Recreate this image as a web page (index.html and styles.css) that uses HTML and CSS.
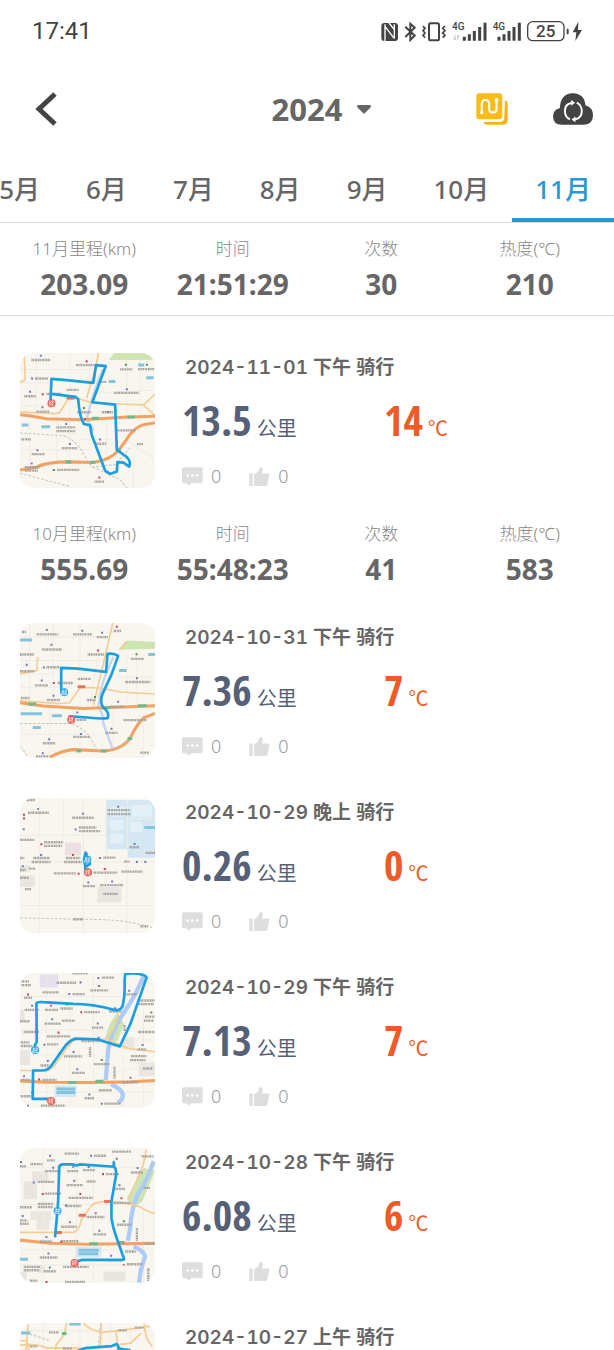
FILE: index.html
```html
<!DOCTYPE html>
<html lang="zh-CN">
<head>
  <meta charset="UTF-8" />
  <meta name="viewport" content="width=device-width, initial-scale=1.0" />
  <title>骑行记录</title>
  <link rel="stylesheet" href="styles.css">
</head>
<body>
  <svg class="defs" aria-hidden="true">
    <symbol id="icon-comment" viewBox="0 0 63 56">
      <path d="M5 0h52q5 0 5 5v38q0 5-5 5H28l-8 8-7-8H5q-5 0-5-5V5q0-5 5-5z" fill="#dedede"/>
      <circle cx="17" cy="25" r="4" fill="#fff"/><circle cx="31" cy="25" r="4" fill="#fff"/><circle cx="45" cy="25" r="4" fill="#fff"/>
    </symbol>
    <symbol id="icon-like" viewBox="0 0 60 56">
      <path d="M0 19h10v37H0zM14 21Q26 17 30 3q3-5 8-1 4 5-1 17h18q5 0 4 5l-6 28q-1 4-6 4H14z" fill="#dedede"/>
    </symbol>
    <symbol id="pin-start" viewBox="0 0 26 26">
      <circle cx="13" cy="13" r="12" fill="#2ba3e8"/>
      <path d="M6 9h7M9 5v13M9 14h4M6 14q0 5-2 6 8 0 17 0M14 7h6v5h-5v4h6" fill="none" stroke="#fff" stroke-width="2"/>
    </symbol>
    <symbol id="pin-end" viewBox="0 0 26 26">
      <circle cx="13" cy="13" r="12" fill="#ee5a52"/>
      <path d="M9 5l-3 5h4l-4 5h5M5 19l6-1M15 5l-3 5M14 7h5q-2 6-7 8M14 9l6 6M14 16l4 1M13 19l5 2" fill="none" stroke="#fff" stroke-width="2"/>
    </symbol>
  </svg>

  <div class="app">
    <div class="status-bar">
      <span class="clock">17:41</span>
      <div class="status-icons">
        <svg width="17" height="21" viewBox="218 60 51 63">
          <path d="M228 66h32q9 0 9 9v36q0 9-9 9h-32q-9 0-9-9V75q0-9 9-9z" fill="#444"/>
          <path d="M230 70v50M230 76l28 37M242 66l16 20v24M258 70v42M230 88v25" fill="none" stroke="#fff" stroke-width="4"/>
        </svg>
        <svg width="12" height="21" viewBox="289 60 36 63">
          <path d="M293 77l28 27-13 13V68l13 12-28 28" fill="none" stroke="#444" stroke-width="6"/>
        </svg>
        <svg width="24" height="21" viewBox="345 60 72 63">
          <rect x="366" y="67" width="30" height="51" rx="5" fill="none" stroke="#444" stroke-width="6"/>
          <path d="M348 75l6 7-6 7 6 7-6 7 6 7M414 75l-7 7 7 7-7 7 7 7-7 7" fill="none" stroke="#444" stroke-width="5"/>
        </svg>
        <svg width="35" height="21" viewBox="435 60 105 63">
          <text x="435" y="87" class="net">4G</text>
          <path d="M444 103v14l-5-5M452 117v-14l5 5" fill="none" stroke="#bbb" stroke-width="3"/>
          <path d="M472 107v12M487 100v19M502 90v29M518 78v41M534 65v54" stroke="#444" stroke-width="9"/>
        </svg>
        <svg width="28" height="21" viewBox="558 60 84 63">
          <text x="557" y="87" class="net">4G</text>
          <path d="M576 107v12M591 100v19M606 90v29M621 78v41M637 65v54" stroke="#444" stroke-width="9"/>
        </svg>
        <svg width="55" height="21" viewBox="662 60 165 63">
          <rect x="664" y="62" width="109" height="57" rx="15" fill="none" stroke="#444" stroke-width="4"/>
          <path d="M781 83h3q3 0 3 3v11q0 3-3 3h-3z" fill="#444"/>
          <text x="718" y="109" class="battery">25</text>
          <path d="M816 62l-17 32h11l-3 26 20-33h-12z" fill="#444"/>
        </svg>
      </div>
    </div>

    <header class="header">
      <button class="back" aria-label="返回">
        <svg width="22" height="34" viewBox="0 0 22 34"><path d="M20 2L4 17l16 15" fill="none" stroke="#444" stroke-width="5"/></svg>
      </button>
      <label class="year">
        <select aria-label="年份"><option>2024</option></select>
        <svg class="year-arrow" width="14" height="10" viewBox="0 0 14 10"><path d="M1 0h12q2 1 0 3L8 8q-1 1-2 0L1 3q-2-2 0-3z" fill="#666"/></svg>
      </label>
      <div class="actions">
        <button aria-label="轨迹">
          <svg width="32" height="32" viewBox="507 276 95 95">
            <path d="M593 298q8 0 8 9v49q0 14-14 14h-48q-8 0-10-8h49q13 0 13-13z" fill="#f9b21c"/>
            <rect x="508" y="277" width="77" height="77" rx="9" fill="#fbbc1a"/>
            <path d="M524 335v-25q0-13 11-13t11 13v12q0 12 11 12t11-12v-23" fill="none" stroke="#fff" stroke-width="6"/>
            <circle cx="524" cy="334" r="5" fill="#fff"/><circle cx="568" cy="297" r="6" fill="#fff"/>
          </svg>
        </button>
        <button aria-label="同步">
          <svg width="40" height="32" viewBox="738 276 121 96">
            <path d="M765 372q-27-1-27-26 0-19 21-25 1-44 39-45 36 1 38 37 23 6 23 31 0 27-27 28z" fill="#444"/>
            <path d="M794 306q-20 3-20 24 0 18 15 25M805 355q20-3 20-25 0-17-15-25" fill="none" stroke="#fff" stroke-width="6"/>
            <path d="M793 297l12 8-12 9zM806 347l-12 9 12 8z" fill="#fff"/>
          </svg>
        </button>
      </div>
    </header>

    <nav class="tabs">
      <a href="#m5">5月</a>
      <a href="#m6">6月</a>
      <a href="#m7">7月</a>
      <a href="#m8">8月</a>
      <a href="#m9">9月</a>
      <a href="#m10">10月</a>
      <a href="#m11" class="active">11月</a>
    </nav>

    <main class="records">
      <section>
        <dl class="stats stats-top">
          <div><dt>11月里程(km)</dt><dd>203.09</dd></div>
          <div><dt>时间</dt><dd>21:51:29</dd></div>
          <div><dt>次数</dt><dd>30</dd></div>
          <div><dt>热度(℃)</dt><dd>210</dd></div>
        </dl>
        <div class="rides rides-first">
          <article class="ride">
            <svg class="map" viewBox="31 41 403 403">
              <path class="park" d="M296 62l16-21h122v20l-54 1z"/>
              <path class="street" d="M31 130h90M31 200l100-6M80 41v180M180 41v330M245 41l-20 200M31 90h230M350 60v160M390 60v190M250 160l184-8M140 240v120M290 240v110M31 330h210M350 300l84 60M60 240v140M370 340v103M210 300h110"/>
              <path class="river" d="M278 90q-33 80-48 150 18 22 20 34"/>
              <path class="road" d="M265 41l-7 39-28 95M31 217l109 5 10-4 25-40 25-3 45 15 100 4 55 2 34-32M400 197l34 30M31 130l16-10-4-79"/>
              <path class="highway" d="M31 225l29 3 50 9 110 3 120-7 94-3M31 390l49-8q30-16 100-16l70 2q50-8 75-36l20-27q25-43 55-50l34-6"/>
              <path class="rail" d="M31 280l129 8q40 12 65 62l20 30q45 20 85 40l20 23M31 400l150 40M245 382l70-8 45-50"/>
              <path class="label" d="M65 62h56M198 77h56M76 117h38M44 170h35M110 163h44M170 151h36M330 90h36M383 89h50M312 160h74M140 263h56M140 274h56M156 325h46M255 312h34M318 272h58M35 299h30M66 343h38M46 382h44M46 392h40M142 390h66M254 425h28M80 216h38M270 127h18M202 218h42M275 218h33M380 313h20"/>
              <path class="sign" d="M95 261h26M296 126h20M384 77h18M36 256h20M408 115h22"/>
              <path class="sign-green" d="M245 236h22M352 232h22M168 366h16M240 367h16M318 330h14"/>
              <path class="sign-red" d="M170 175h24"/>
              <path class="poi" d="M93 46v6M67 114v6M61 154v6M98 200v6M169 250v6M180 310v6M270 296v6M83 328v6M66 368v6M350 146v6M293 214v6"/>
              <path class="poi-red" d="M230 63v6M99 161v6M225 235v6M268 410v6"/>
              <path class="poi-green" d="M347 73v6M410 73v6M222 202v6M132 387v6"/>
              <path class="route" d="M122 182l3-64 45 4 80 8 8-53 29 3-40 108 68 7 5 135 28 20q16 15 9 30l-17-12-18-1-2 28-20 7-15-10-40-107-5-28-18-4q-14-23-17-73l-8-8-72-9"/>
              <use href="#pin-end" x="112" y="178" width="26" height="26"/>
            </svg>
            <div class="info">
              <h3>2024-11-01 下午 骑行</h3>
              <div class="figures">
                <p class="distance"><b>13.5</b>公里</p>
                <p class="heat"><b>14</b>℃</p>
              </div>
              <div class="social">
                <button aria-label="评论"><svg class="social-icon"><use href="#icon-comment"/></svg>0</button>
                <button aria-label="点赞"><svg class="social-icon"><use href="#icon-like"/></svg>0</button>
              </div>
            </div>
          </article>
        </div>
      </section>

      <section>
        <dl class="stats">
          <div><dt>10月里程(km)</dt><dd>555.69</dd></div>
          <div><dt>时间</dt><dd>55:48:23</dd></div>
          <div><dt>次数</dt><dd>41</dd></div>
          <div><dt>热度(℃)</dt><dd>583</dd></div>
        </dl>
        <div class="rides">
          <article class="ride">
            <svg class="map" viewBox="31 38 403 403">
              <path class="park" d="M328 118l22-28 84 5v20z"/>
              <path class="street" d="M31 150h270M60 38v240M130 38v240M210 38v380M31 80h270M320 200h114M380 115v175M350 140v140M31 230h150M31 370h240M120 290v140M310 290v110M400 330v108M270 100l-30 180M31 190h100"/>
              <path class="river" d="M310 140q-38 70-45 145 16 30 14 50l28 78"/>
              <path class="road" d="M308 38l-16 70-42 175M31 270l110 8q20 1 38-2l32-46 60 2 60 12 103 6M31 190l50-10 3-40M328 118l20-25"/>
              <path class="highway" d="M31 276l70 10 120 7 213-8M120 438q40-20 70-22l90 4q60-5 82-42 18-40 40-58l32-12"/>
              <path class="rail" d="M31 338h150q50 15 70 60l10 20M300 415q40-10 60-40M31 408q14 12 22 30"/>
              <path class="label" d="M80 72h65M190 72h56M97 117h58M110 170h38M31 132h42M31 182h44M76 224h38M143 217h46M233 132h50M345 214h75M203 205h38M112 268h40M340 328h70M190 378h48M100 397h36M286 366h36M260 80h34M310 62h24M362 145h40M300 288h42M200 327h30M78 436h38M390 425h26M36 65h14M34 262h25M230 268h26"/>
              <path class="sign" d="M31 89h36M327 180h22M414 132h20M126 315h30M33 309h64M69 350h24"/>
              <path class="sign-green" d="M55 280h24M383 285h26M276 291h24M352 383h14M273 420h16M200 420h14"/>
              <path class="sign-red" d="M203 228h23"/>
              <path class="poi" d="M111 56v6M217 58v6M276 64v6M125 100v6M102 168v6M51 160v6M96 207v6M131 252v6M324 270v6M213 366v6M304 351v6M118 382v6M99 424v6M202 302v6M380 200v6"/>
              <path class="poi-red" d="M264 117v6M132 214v6M320 46v6"/>
              <path class="poi-green" d="M379 128v6M255 256v6"/>
              <path class="route" d="M154 238V172l50 2 84 10 4-54q20-3 32 6l-20 56-26 56q-10 24 1 42 20 14 14 32-20 3-60-2l-54-3"/>
              <use href="#pin-start" x="150" y="232" width="26" height="26"/>
              <use href="#pin-end" x="171" y="314" width="26" height="26"/>
            </svg>
            <div class="info">
              <h3>2024-10-31 下午 骑行</h3>
              <div class="figures">
                <p class="distance"><b>7.36</b>公里</p>
                <p class="heat"><b>7</b>℃</p>
              </div>
              <div class="social">
                <button aria-label="评论"><svg class="social-icon"><use href="#icon-comment"/></svg>0</button>
                <button aria-label="点赞"><svg class="social-icon"><use href="#icon-like"/></svg>0</button>
              </div>
            </div>
          </article>

          <article class="ride">
            <svg class="map" viewBox="31 39 403 403">
              <path class="campus" d="M288 45h146v172h-82v-25h-64z"/>
              <path class="campus-inner" d="M300 65h45v30h-45zM300 105h40v30h-40zM300 145h40v30h-40zM360 110h35v30h-35zM365 60h60v35h-60z"/>
              <path class="mall" d="M165 172h48v38h-48z"/>
              <path class="block" d="M31 270h44v35H31zM262 305h72v46h-72zM31 240h30v20H31z"/>
              <path class="street" d="M31 150h257M90 39v402M160 39v150M288 39v260M350 217v224M31 360h403M31 230h403M220 39v402M350 100h84M352 39v150"/>
              <path class="sign" d="M402 127h32"/>
              <path class="rail" d="M31 397l180 4q100 0 150 9l73 17"/>
              <path class="label" d="M55 83h62M187 98h65M292 75h66M292 87h70M207 127h52M207 138h63M31 164h44M103 171h56M103 182h54M71 218h48M66 230h56M168 218h44M163 230h54M280 217h36M342 229h16M132 264h66M250 262h72M334 259h64M219 302h36M270 299h68M358 186h30M406 203h28M190 401h30M390 422h24M50 45h26M31 218h14M58 250h20M46 311h20M280 325h44M31 254h16M31 277h26"/>
              <path class="poi" d="M85 69v5M219 83v6M197 130v6M324 62v6M373 173v6M94 206v6M270 215v6M235 288v6M306 285v6M380 227v6M405 227v6M42 129v6M39 240v6"/>
              <path class="poi-red" d="M95 174v6M189 206v6M206 262v6M284 248v6M43 86v6M43 97v6"/>
              <path class="route" d="M226 252v-10l-4-20 5-20 3 6-6 14 12 0 4 14-12 8"/>
              <use href="#pin-start" x="219" y="210" width="26" height="26"/>
              <use href="#pin-end" x="221" y="248" width="26" height="26"/>
            </svg>
            <div class="info">
              <h3>2024-10-29 晚上 骑行</h3>
              <div class="figures">
                <p class="distance"><b>0.26</b>公里</p>
                <p class="heat"><b>0</b>℃</p>
              </div>
              <div class="social">
                <button aria-label="评论"><svg class="social-icon"><use href="#icon-comment"/></svg>0</button>
                <button aria-label="点赞"><svg class="social-icon"><use href="#icon-like"/></svg>0</button>
              </div>
            </div>
          </article>

          <article class="ride">
            <svg class="map" viewBox="31 40 403 403">
              <path class="mall-purple" d="M90 45h55v38H90z"/>
              <path class="block" d="M335 232h38v36h-38zM386 308h48v40h-48zM31 270h30v45H31zM31 150h14v30H31z"/>
              <path class="park" d="M322 158l-22 32-18 50 40 4 20-50z"/>
              <path class="street" d="M31 110h300M31 210h260M110 40v400M180 130v310M250 40v320M31 285h230M31 395h400M400 60v380M340 280v160M300 340l134-30M360 240h74"/>
              <path class="river-wide" d="M400 50q-25 60-60 110-40 60-46 110l-7 90M303 372q30 14 35 30 0 20-16 25"/>
              <path class="road" d="M31 331h85l14-10 42-58q12-20 30-26h90l60 28 82 10M325 165q-10 40-35 74"/>
              <path class="highway" d="M31 362l80 4 130 1 120-2 73-4"/>
              <path class="campus" d="M134 376h66v18l-2 16h-64z"/>
              <path class="label" d="M140 69h60M188 41h46M276 54h36M98 98h48M188 103h36M241 92h54M341 104h40M45 150h42M106 150h40M152 146h36M223 157h46M297 155h37M104 191h48M156 182h38M246 203h34M112 229h70M384 216h50M390 122h44M382 133h50M404 170h30M401 182h30M42 216h46M112 253h34M33 247h26M33 258h34M214 243h56M92 316h26M163 289h54M186 338h38M252 312h46M382 268h26M362 288h46M360 300h46M36 359h26M98 359h42M224 414h30M32 408h34M94 436h72M336 366h46M283 430h48M398 325h30M44 114h24M35 65h24M35 76h28M31 184h30"/>
              <path class="label" d="M313 320v36M240 262v30M343 195v20M266 390h40"/>
              <path class="sign" d="M140 386h56M140 397h56"/>
              <path class="sign-green" d="M175 367h24M256 363h24"/>
              <path class="poi" d="M265 52v6M212 65v6M178 100v6M267 76v6M357 90v6M67 135v6M124 135v6M171 131v6M127 175v6M263 188v6M266 230v6M104 251v6M191 273v6M114 300v6M202 324v6M315 142v6M423 155v6M397 252v6M43 345v6M361 350v6M238 400v6M67 394v6M275 427v6M55 433v6"/>
              <path class="poi-red" d="M214 154v6M146 215v6M55 101v6M88 355v6M148 278v6"/>
              <path class="poi-green" d="M275 297v6"/>
              <path class="route" d="M75 256l6-10-1-115q2-6 20-4l90 5q60 0 122 18 25 4 27-20 6-30 4-65l2-22q28-4 52 2 16 6 10 14l-46 132-32 68-68-21-65-2q-20 6-36 30l-35 50q-8 14-25 15H70l-1 85h46"/>
              <use href="#pin-start" x="63" y="257" width="26" height="26"/>
              <use href="#pin-end" x="111" y="409" width="26" height="26"/>
            </svg>
            <div class="info">
              <h3>2024-10-29 下午 骑行</h3>
              <div class="figures">
                <p class="distance"><b>7.13</b>公里</p>
                <p class="heat"><b>7</b>℃</p>
              </div>
              <div class="social">
                <button aria-label="评论"><svg class="social-icon"><use href="#icon-comment"/></svg>0</button>
                <button aria-label="点赞"><svg class="social-icon"><use href="#icon-like"/></svg>0</button>
              </div>
            </div>
          </article>

          <article class="ride">
            <svg class="map" viewBox="31 41 403 403">
              <path class="block" d="M66 111h50v30H66zM42 140h40v54H42zM62 230h62v26H62zM80 250h38v35H80zM280 410h66v28h-66zM31 410h20v28H31zM85 390h20v24H85z"/>
              <path class="park" d="M400 100l-50 90 20 30 26-20 38-90z"/>
              <path class="street" d="M31 100h370M100 41v402M250 90v350M31 210h310M200 41v280M31 345h400M31 390h320M400 210v230M430 200v130"/>
              <path class="river-wide" d="M430 80q-20 60-48 100-20 50-22 100l-7 38M370 335q30 12 34 30l-12 40-6 38"/>
              <path class="road" d="M409 41l-10 50-45 106M31 293h160q16-4 24-40l22-30q10-20 40-22l60 3 50 12q30 18 47 20"/>
              <path class="highway" d="M31 316l90 9 110 3 203-3"/>
              <path class="campus" d="M197 336h77v20l-7 12h-70z"/>
              <path class="label" d="M306 52h56M164 58h44M252 64h36M62 89h36M31 96h20M394 66h36M106 110h46M172 110h34M219 107h36M362 114h36M84 142h48M170 152h48M230 141h26M288 119h40M316 163h30M105 177h48M176 190h72M168 214h46M84 208h46M84 217h46M31 218h36M310 205h52M230 247h54M154 276h46M31 257h22M31 267h26M250 299h38M320 270h44M91 320h36M157 319h50M90 368h54M42 396h48M42 406h46M102 409h36M160 396h76M290 376h44M350 388h46M166 441h60M345 350h32M400 160h20M404 327h30M60 437h24M112 78h24"/>
              <path class="label" d="M380 280v40M414 400v38"/>
              <path class="sign" d="M206 346h60M206 357h58M31 373h24"/>
              <path class="sign-green" d="M238 327h26M322 323h22"/>
              <path class="sign-red" d="M282 201h20M206 242h22M136 293h20"/>
              <path class="poi" d="M121 61v6M243 61v6M190 94v6M236 95v6M320 70v6M382 98v6M72 141v6M193 136v6M34 80v6M328 149v6M168 210v6M39 241v6M257 233v6M180 260v6M110 304v6M268 285v6M116 353v6M303 360v6M120 395v6M130 97v6"/>
              <path class="poi-red" d="M279 116v6M99 175v6M211 175v6M154 317v6M110 438v6M341 388v4M334 188v6"/>
              <path class="poi-green" d="M341 257v6"/>
              <path class="route" d="M136 304l7-78 2-30 3-98q2-8 12-8l30 0 10 3 12-3 100 7-1-14 0 14q8 4 7 24l-14 80v50q4 26 14 54l24 68-7 2-118 0-18 5"/>
              <use href="#pin-start" x="130" y="216" width="26" height="26"/>
              <use href="#pin-end" x="181" y="371" width="26" height="26"/>
            </svg>
            <div class="info">
              <h3>2024-10-28 下午 骑行</h3>
              <div class="figures">
                <p class="distance"><b>6.08</b>公里</p>
                <p class="heat"><b>6</b>℃</p>
              </div>
              <div class="social">
                <button aria-label="评论"><svg class="social-icon"><use href="#icon-comment"/></svg>0</button>
                <button aria-label="点赞"><svg class="social-icon"><use href="#icon-like"/></svg>0</button>
              </div>
            </div>
          </article>

          <article class="ride">
            <svg class="map" viewBox="31 567 403 403">
              <path class="street" d="M31 590h403M100 567v200M210 567v200M300 567v200M360 567v200"/>
              <path class="road" d="M56 567l-8 90M170 567l-6 34-24 30-8 40M31 634q50-8 80 8h110M220 567q20 24 60 28l44-5 60-8 50-8M402 567q2 50 24 70M318 592l4 40 40-5 30-30M31 620h20q10 20 4 50M270 640l4-70"/>
              <path class="rail" d="M272 567l-8 70M60 600l60 20"/>
              <path class="label" d="M118 595h30M324 589h26M374 581h26M160 643h26M60 637h24"/>
              <path class="sign" d="M34 597h28M178 570h34"/>
              <path class="sign-green" d="M156 598h14M320 645h16"/>
              <path class="route" d="M205 650l20-8 80-6 15-6 8 14 30 4"/>
            </svg>
            <div class="info">
              <h3>2024-10-27 上午 骑行</h3>
            </div>
          </article>
        </div>
      </section>
    </main>
  </div>
</body>
</html>
```

FILE: styles.css
```css
* {
  box-sizing: border-box;
}
body {
  margin: 0;
  background: #fff;
  color: #666;
  font-family: "Noto Sans", "Noto Sans CJK SC", sans-serif;
}
button, select {
  font-family: inherit;
  color: inherit;
  background: none;
  border: none;
  padding: 0;
  cursor: pointer;
}
svg {
  display: block;
}
.defs {
  position: absolute;
  width: 0;
  height: 0;
}
.app {
  height: 100vh;
  display: flex;
  flex-direction: column;
  overflow: hidden;
}

/* status bar */
.status-bar {
  display: flex;
  justify-content: space-between;
  align-items: center;
  height: 62px;
  flex: none;
  padding: 0 32px;
  color: #444;
}
.clock {
  font: 24px Roboto, sans-serif;
}
.status-icons {
  display: flex;
  gap: 6px;
}
.net {
  font: 500 30px Roboto, sans-serif;
  fill: #444;
}
.battery {
  font: 500 51px Roboto, sans-serif;
  fill: #444;
  text-anchor: middle;
}

/* header */
.header {
  display: grid;
  grid-template-columns: 1fr auto 1fr;
  align-items: center;
  flex: none;
  height: 94px;
  padding: 0 21px;
}
.back {
  justify-self: start;
  margin-left: 14px;
}
.year {
  position: relative;
}
.year select {
  appearance: none;
  font-size: 31px;
  font-weight: 700;
  line-height: 42px;
  padding: 0 28px;
}
.year-arrow {
  position: absolute;
  right: 0;
  top: 17px;
  pointer-events: none;
}
.actions {
  display: flex;
  justify-content: flex-end;
  gap: 45px;
}

/* month tabs */
.tabs {
  display: flex;
  justify-content: flex-end;
  flex: none;
  height: 67px;
  border-bottom: 1px solid #d8d8d8;
}
.tabs a {
  flex: none;
  padding: 0 23px;
  line-height: 66px;
  height: 66px;
  font-size: 26px;
  font-weight: 500;
  color: #666;
  text-decoration: none;
}
.tabs .active {
  color: #2599d4;
  border-bottom: 4px solid #2599d4;
}

/* records */
.records {
  flex: 1;
  min-height: 0;
  overflow-y: auto;
  scrollbar-width: none;
}
.stats {
  display: grid;
  grid-template-columns: repeat(4, 1fr);
  margin: 0;
  padding: 14px 10px 13px;
  text-align: center;
}
.stats-top {
  border-bottom: 1px solid #dedede;
}
.stats dt {
  font-size: 17px;
  font-weight: 300;
  line-height: 24px;
  color: #888;
}
.stats dd {
  margin: 5px 0 0;
  font-size: 28px;
  font-weight: 700;
  line-height: 36px;
}
.rides {
  padding: 3px 20px 0;
}
.rides-first {
  padding-top: 17px;
}
.ride {
  display: flex;
  gap: 27px;
  padding: 20px 0;
}
.map {
  flex: none;
  width: 135px;
  height: 135px;
  border-radius: 14px;
  background: #f9f6f0;
}
.info {
  flex: 1;
}
.info h3 {
  margin: 0 0 0 3px;
  font-family: Inter, "Noto Sans CJK SC", sans-serif;
  font-size: 19px;
  font-weight: 600;
  font-variant-numeric: tabular-nums;
  line-height: 30px;
}
.figures {
  display: grid;
  grid-template-columns: 202px 1fr;
  margin-top: 11px;
}
.figures p {
  display: flex;
  align-items: baseline;
  gap: 5px;
  margin: 0;
  font-family: "Noto Sans CJK SC", sans-serif;
  font-size: 20px;
  line-height: 24px;
}
.figures b {
  font-family: "Noto Sans ExtraCondensed", "Open Sans Condensed", "Roboto Condensed", sans-serif;
  font-size: 42px;
  line-height: 52px;
}
.distance {
  color: #566178;
}
.heat {
  color: #ee5a28;
}
.social {
  display: flex;
  gap: 28px;
  margin-top: 18px;
}
.social button {
  display: flex;
  align-items: center;
  gap: 8px;
  font-size: 18px;
  font-weight: 300;
  line-height: 24px;
  color: #999;
}
.social-icon {
  width: 21px;
  height: 19px;
}

/* map thumbnails */
.map path {
  fill: none;
}
.map .park {
  fill: #cde5b0;
}
.map .block {
  fill: #e9e6e2;
}
.map .campus {
  fill: #d5e7f3;
}
.map .campus-inner {
  fill: #e4f0f8;
}
.map .mall {
  fill: #eedfe2;
}
.map .mall-purple {
  fill: #e4e0ee;
}
.street {
  stroke: #f0ece5;
  stroke-width: 3;
}
.river {
  stroke: #c3d5f3;
  stroke-width: 7;
}
.river-wide {
  stroke: #aecbf5;
  stroke-width: 13;
}
.road {
  stroke: #f3cd93;
  stroke-width: 5;
}
.highway {
  stroke: #f2a364;
  stroke-width: 9;
}
.rail {
  stroke: #c4c4c4;
  stroke-width: 3;
  stroke-dasharray: 8 5;
}
.label {
  stroke: #a3a09d;
  stroke-width: 7;
  stroke-dasharray: 3 1 4 2;
}
.sign {
  stroke: #83c4dc;
  stroke-width: 9;
}
.sign-green {
  stroke: #6fb98b;
  stroke-width: 9;
}
.sign-red {
  stroke: #e5745f;
  stroke-width: 9;
}
.poi {
  stroke: #6e7fb8;
  stroke-width: 6;
}
.poi-red {
  stroke: #c3485a;
  stroke-width: 6;
}
.poi-green {
  stroke: #3f9e4d;
  stroke-width: 6;
}
.route {
  stroke: #1b9fe0;
  stroke-width: 8;
  stroke-linejoin: round;
  stroke-linecap: round;
}
```
